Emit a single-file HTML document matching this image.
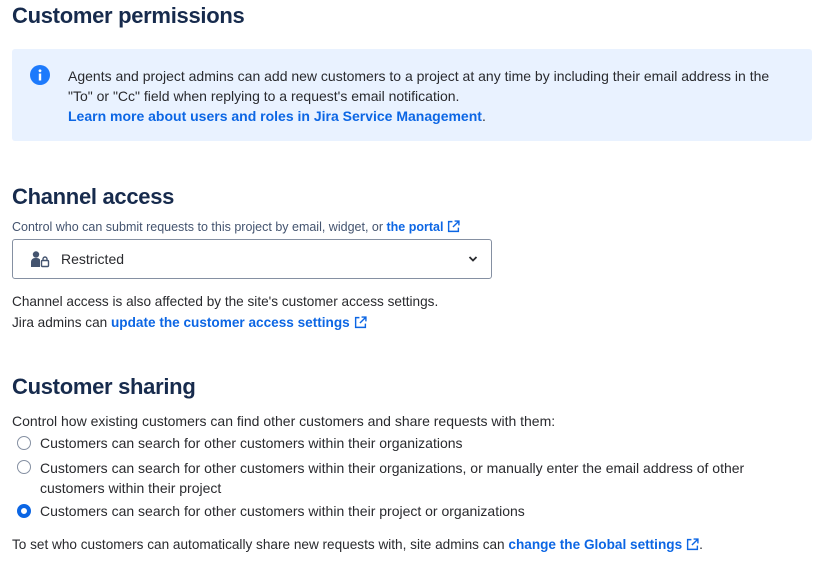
<!DOCTYPE html>
<html><head><meta charset="utf-8"><style>
*{margin:0;padding:0;box-sizing:border-box}
body{width:817px;height:571px;overflow:hidden;background:#fff;font-family:"Liberation Sans",sans-serif;color:#292a2e;font-size:14px;position:relative}
.a{position:absolute;white-space:nowrap}
h1{position:absolute;left:12px;font-size:22px;font-weight:bold;color:#172b4d;white-space:nowrap;letter-spacing:-0.3px}
a{color:#0c66e4;font-weight:bold;text-decoration:none}
.box{position:absolute;left:12px;top:49px;width:800px;height:92px;background:#e9f2ff;border-radius:3px}
.radio{position:absolute;left:17px;width:14px;height:14px;border:1.5px solid #8590a2;border-radius:50%;background:#fff}
.radio.on{border:4px solid #0c66e4}
.ext{display:inline-block;vertical-align:-2px;margin-left:4px}
</style></head><body>
<h1 style="top:3px">Customer permissions</h1>
<div class="box"></div>
<svg class="a" style="left:30px;top:65px" width="20" height="20"><circle cx="10" cy="10" r="10" fill="#1d7afc"/><rect x="8.8" y="8.5" width="2.4" height="7" fill="#fff"/><circle cx="10" cy="5.8" r="1.4" fill="#fff"/></svg>
<div class="a" style="left:68px;top:66px;line-height:20px;font-size:14px">Agents and project admins can add new customers to a project at any time by including their email address in the<br>"To" or "Cc" field when replying to a request's email notification.<br><a href="#">Learn more about users and roles in Jira Service Management</a>.</div>
<h1 style="top:184px">Channel access</h1>
<div class="a" style="left:12px;top:220px;font-size:12.5px;color:#44546f">Control who can submit requests to this project by email, widget, or <a href="#">the portal</a><svg class="ext" width="13" height="13" viewBox="0 0 12 12" fill="none" stroke="#0c66e4" stroke-width="1.3"><path d="M5 1.5H1.5v9h9V7M7 1H11V5M11 1L5.5 6.5"/></svg></div>
<div class="a" style="left:12px;top:239px;width:480px;height:40px;border:1px solid #8590a2;border-radius:3px"></div>
<svg class="a" style="left:31px;top:251px" width="20" height="17" viewBox="0 0 20 17"><circle cx="5" cy="3.5" r="3.2" fill="#44546f"/><path d="M0 16V11a4 4 0 0 1 4-4h2a4 4 0 0 1 3 1.5V16z" fill="#44546f"/><rect x="10.5" y="9.5" width="7" height="6" rx="1" fill="none" stroke="#44546f" stroke-width="1.4"/><path d="M12 9.5V8a2 2 0 0 1 4 0v1.5" fill="none" stroke="#44546f" stroke-width="1.4"/></svg>
<div class="a" style="left:61px;top:251px;font-size:14px">Restricted</div>
<svg class="a" style="left:468px;top:255px" width="10" height="8"><path d="M1.5 2L5 5.5 8.5 2" fill="none" stroke="#292a2e" stroke-width="1.8"/></svg>
<div class="a" style="left:12px;top:291px;line-height:21px;font-size:13.6px">Channel access is also affected by the site's customer access settings.<br>Jira admins can <a href="#">update the customer access settings</a><svg class="ext" width="13" height="13" viewBox="0 0 12 12" fill="none" stroke="#0c66e4" stroke-width="1.3"><path d="M5 1.5H1.5v9h9V7M7 1H11V5M11 1L5.5 6.5"/></svg></div>
<h1 style="top:374px">Customer sharing</h1>
<div class="a" style="left:12px;top:413px;font-size:14px">Control how existing customers can find other customers and share requests with them:</div>
<div class="radio" style="top:436px"></div>
<div class="a" style="left:40px;top:435px;font-size:14px">Customers can search for other customers within their organizations</div>
<div class="radio" style="top:460px"></div>
<div class="a" style="left:40px;top:458px;line-height:20px;font-size:14px">Customers can search for other customers within their organizations, or manually enter the email address of other<br>customers within their project</div>
<div class="radio on" style="top:504px"></div>
<div class="a" style="left:40px;top:503px;font-size:14px">Customers can search for other customers within their project or organizations</div>
<div class="a" style="left:12px;top:537px;font-size:13.6px">To set who customers can automatically share new requests with, site admins can <a href="#">change the Global settings</a><svg class="ext" width="13" height="13" viewBox="0 0 12 12" fill="none" stroke="#0c66e4" stroke-width="1.3"><path d="M5 1.5H1.5v9h9V7M7 1H11V5M11 1L5.5 6.5"/></svg>.</div>
</body></html>
